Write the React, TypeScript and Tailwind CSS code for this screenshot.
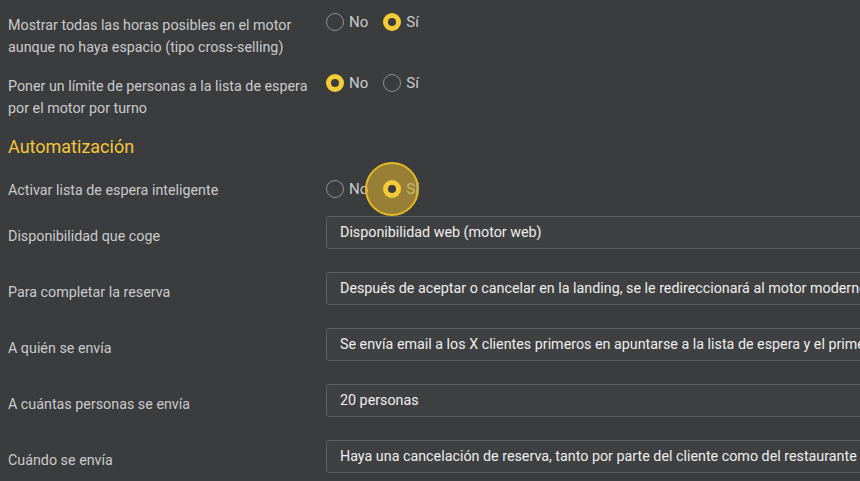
import React from 'react';

const FIELDS = [
  { label: 'Disponibilidad que coge', value: 'Disponibilidad web (motor web)' },
  { label: 'Para completar la reserva', value: 'Después de aceptar o cancelar en la landing, se le redireccionará al motor moderno' },
  { label: 'A quién se envía', value: 'Se envía email a los X clientes primeros en apuntarse a la lista de espera y el primero que reserve se queda la mesa' },
  { label: 'A cuántas personas se envía', value: '20 personas' },
  { label: 'Cuándo se envía', value: 'Haya una cancelación de reserva, tanto por parte del cliente como del restaurante' },
];

function Radio({ checked, label, ripple }: { checked: boolean; label: string; ripple?: boolean }) {
  return (
    <label className="flex items-center gap-[5px] relative">
      <span className="relative w-[18px] h-[18px] flex items-center justify-center">
        {ripple && (
          <span className="absolute w-[54px] h-[54px] rounded-full bg-[#f3c32d]/50 border-2 border-[#e6b826] left-1/2 top-1/2 -translate-x-1/2 -translate-y-1/2" />
        )}
        {checked ? (
          <span className="relative w-[18px] h-[18px] rounded-full bg-[#f6cb37] flex items-center justify-center">
            <span className="w-[8px] h-[8px] rounded-full bg-[#3a3c3e]" />
          </span>
        ) : (
          <span className="w-[18px] h-[18px] rounded-full border border-[#8e9092]" />
        )}
      </span>
      <span className={`relative text-[15px] ${ripple ? 'text-[#cbb874]' : 'text-[#c9cbcd]'}`}>{label}</span>
    </label>
  );
}

function YesNo({ value, ripple }: { value: 'no' | 'si'; ripple?: boolean }) {
  return (
    <div className="flex items-center gap-[15px]">
      <Radio checked={value === 'no'} label="No" />
      <Radio checked={value === 'si'} label="Sí" ripple={ripple} />
    </div>
  );
}

export default function App() {
  return (
    <div className="w-[860px] h-[481px] overflow-hidden bg-[#3a3c3e] text-[#c9cbcd] pl-2" style={{ fontFamily: 'Roboto, "Noto Sans", sans-serif' }}>
      {/* ajustes motor */}
      <div className="flex pt-[14px]">
        <p className="w-[318px] text-[14.3px] leading-[22px]">
          Mostrar todas las horas posibles en el motor<br />aunque no haya espacio (tipo cross-selling)
        </p>
        <div className="-mt-[3px]"><YesNo value="si" /></div>
      </div>
      <div className="flex mt-[17px]">
        <p className="w-[318px] text-[14.3px] leading-[22px]">
          Poner un límite de personas a la lista de espera<br />por el motor por turno
        </p>
        <div className="-mt-[3px]"><YesNo value="no" /></div>
      </div>

      <h2 className="text-[18px] font-normal text-[#f5c63a] mt-[16px] leading-[24px]">Automatización</h2>

      <div className="flex items-center mt-[19px] h-[22px]">
        <p className="w-[318px] text-[14.3px] leading-[22px] mt-[2px]">Activar lista de espera inteligente</p>
        <YesNo value="si" ripple />
      </div>

      <div className="flex flex-col gap-[23px] mt-[16px]">
        {FIELDS.map((f) => (
          <div key={f.label} className="flex items-center">
            <p className="w-[318px] shrink-0 text-[14.3px] pt-[8px]">{f.label}</p>
            <div className="h-[33px] min-w-[560px] flex items-center pl-[13px] border border-[#5c5e60] rounded-[3px] bg-[#3e4042] text-[14.3px] text-[#eeeeee] whitespace-nowrap overflow-hidden">
              {f.value}
            </div>
          </div>
        ))}
      </div>
    </div>
  );
}
